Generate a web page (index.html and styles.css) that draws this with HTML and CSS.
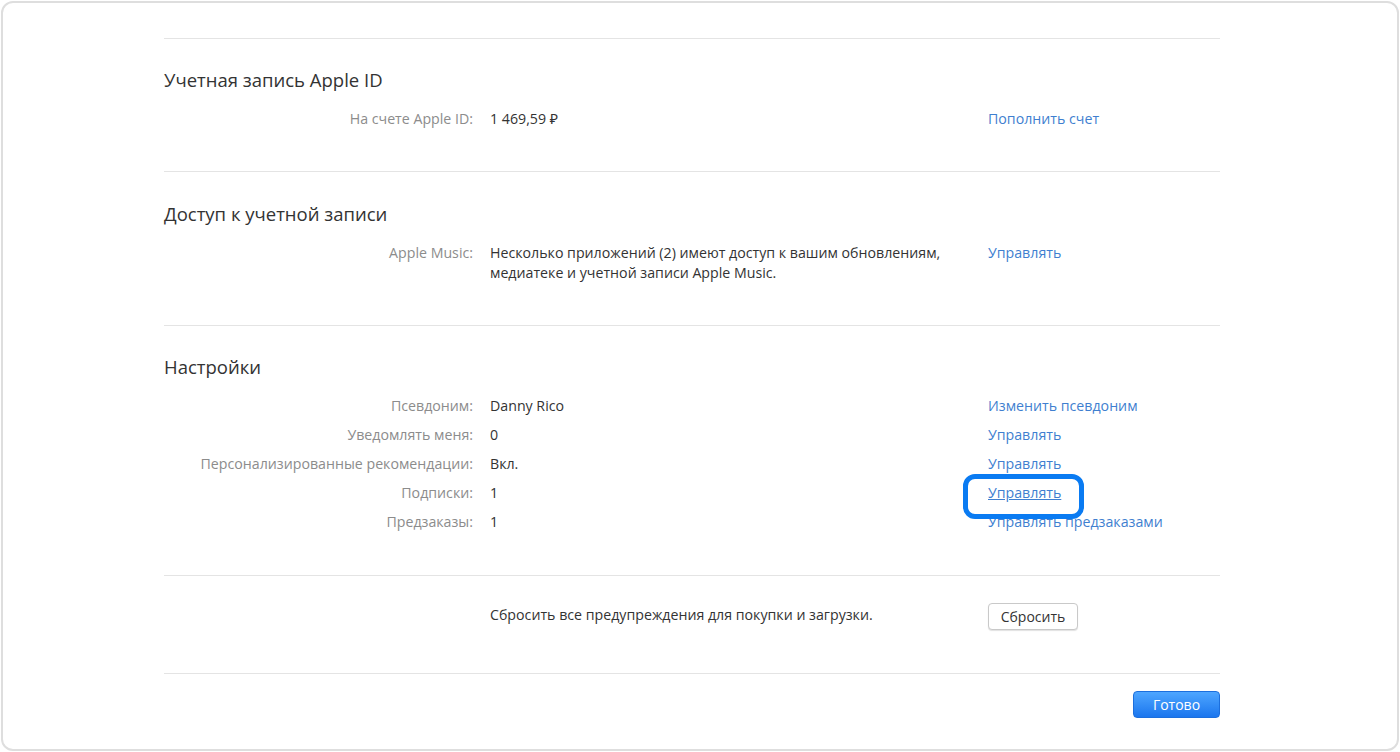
FILE: index.html
```html
<!DOCTYPE html>
<html lang="ru">
<head>
<meta charset="utf-8">
<title>Информация об учетной записи</title>
<link rel="stylesheet" href="styles.css">
</head>
<body>
<div class="frame">
  <div class="content">
    <section class="section">
      <h2 class="heading">Учетная запись Apple ID</h2>
      <div class="grid">
        <div class="label">На счете Apple ID:</div>
        <div class="value">1 469,59 ₽</div>
        <div class="action"><a class="link">Пополнить счет</a></div>
      </div>
    </section>
    <section class="section section-access">
      <h2 class="heading">Доступ к учетной записи</h2>
      <div class="grid">
        <div class="label">Apple Music:</div>
        <div class="value">Несколько приложений (2) имеют доступ к вашим обновлениям, медиатеке и учетной записи Apple Music.</div>
        <div class="action"><a class="link">Управлять</a></div>
      </div>
    </section>
    <section class="section section-settings">
      <h2 class="heading">Настройки</h2>
      <div class="grid">
        <div class="label">Псевдоним:</div>
        <div class="value">Danny Rico</div>
        <div class="action"><a class="link">Изменить псевдоним</a></div>
        <div class="label">Уведомлять меня:</div>
        <div class="value">0</div>
        <div class="action"><a class="link">Управлять</a></div>
        <div class="label">Персонализированные рекомендации:</div>
        <div class="value">Вкл.</div>
        <div class="action"><a class="link">Управлять</a></div>
        <div class="label">Подписки:</div>
        <div class="value">1</div>
        <div class="action"><a class="link link-under highlighted">Управлять<span class="ring"></span></a></div>
        <div class="label">Предзаказы:</div>
        <div class="value">1</div>
        <div class="action"><a class="link">Управлять предзаказами</a></div>
      </div>
    </section>
    <section class="section section-reset">
      <div class="grid grid-reset">
        <div class="label"></div>
        <div class="value">Сбросить все предупреждения для покупки и загрузки.</div>
        <div class="action"><button class="btn btn-plain">Сбросить</button></div>
      </div>
    </section>
    <div class="footer">
      <button class="btn btn-primary">Готово</button>
    </div>
  </div>
</div>
</body>
</html>
```

FILE: styles.css
```css
* { box-sizing: border-box; }
html, body { margin: 0; padding: 0; background: #ffffff; }
body {
  font-family: "Open Sans", "Noto Sans", "Liberation Sans", sans-serif;
  font-size: 14.2px;
  color: #333333;
}
.frame {
  margin: 1px;
  height: 750px;
  border: 2px solid #dedede;
  border-radius: 12px;
  background: #ffffff;
  padding-top: 35px;
}
.content {
  width: 1056px;
  margin-left: 161px;
}
.section {
  border-top: 1px solid #e4e4e4;
  padding: 29px 0 42px;
}
.section-access { padding-top: 30px; }
.section-settings { padding-bottom: 43px; }
.heading {
  margin: 0 0 17px;
  font-size: 18.5px;
  line-height: 24px;
  font-weight: 400;
  color: #333333;
}
.grid {
  display: grid;
  grid-template-columns: 309px 481px 1fr;
  column-gap: 17px;
  row-gap: 9px;
  line-height: 20px;
}
.label {
  text-align: right;
  color: #8c8c8c;
}
.value {
  color: #333333;
  padding-right: 20px;
}
.link {
  color: #3f7fd0;
  text-decoration: none;
  cursor: pointer;
}
.link-under { text-decoration: underline; }
.highlighted { position: relative; display: inline-block; }
.ring {
  position: absolute;
  left: -25px;
  top: -9px;
  width: 121px;
  height: 45px;
  border: 5.5px solid #0a7bf2;
  border-radius: 12px;
  pointer-events: none;
}
.section-reset { padding: 27px 0 43px; }
.grid-reset { align-items: center; }
.grid-reset .value { margin-top: -3px; }
.btn {
  font-family: inherit;
  font-size: 14px;
  height: 27px;
  border-radius: 4px;
  padding: 0;
  cursor: pointer;
}
.btn-plain {
  width: 90px;
  background: #ffffff;
  border: 1px solid #c9c9c9;
  box-shadow: 0 1px 1px rgba(0,0,0,0.12);
  color: #333333;
}
.footer {
  border-top: 1px solid #e4e4e4;
  padding-top: 17px;
  display: flex;
  justify-content: flex-end;
}
.btn-primary {
  width: 87px;
  background: linear-gradient(#4ea6ff, #1b76ee);
  border: 1px solid #1c6fdd;
  color: #ffffff;
}
```
